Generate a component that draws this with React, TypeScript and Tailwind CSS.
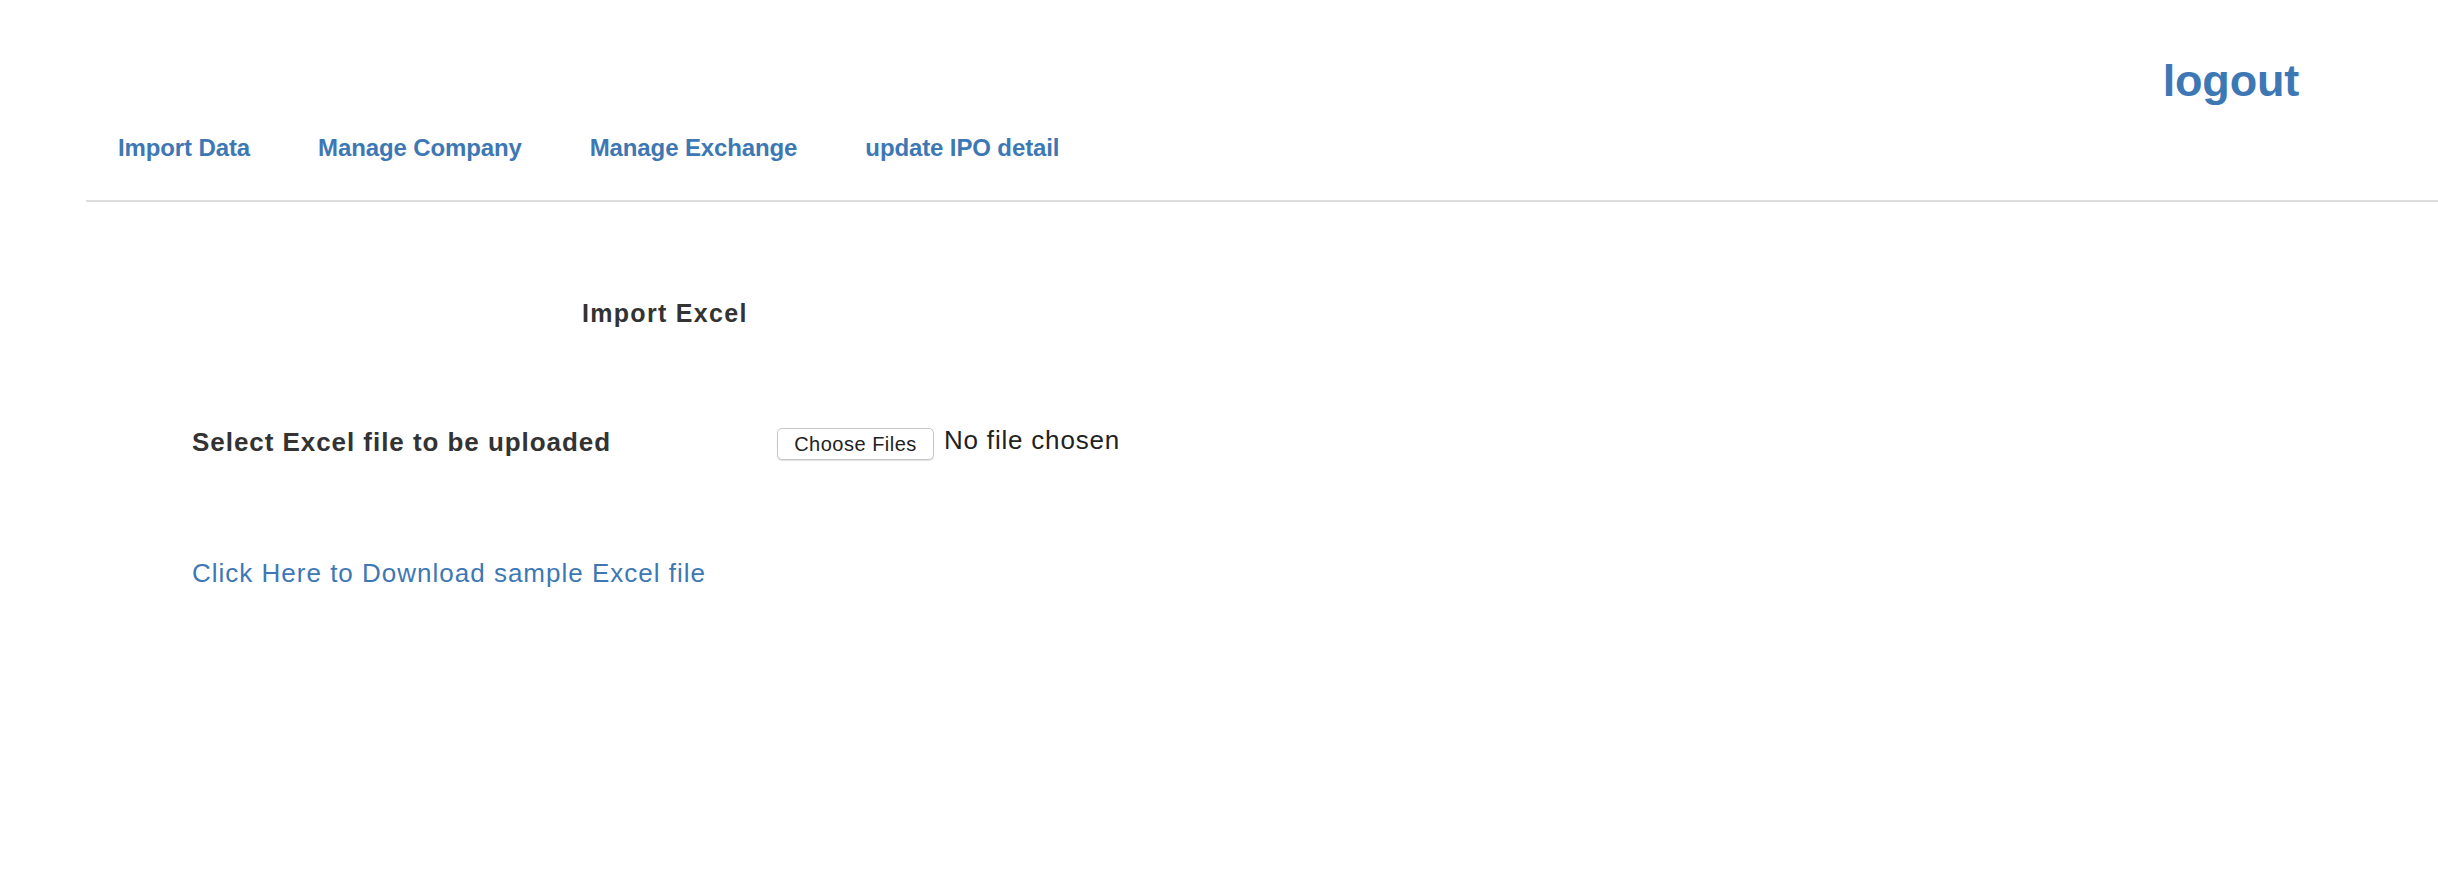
const navItems = ["Import Data", "Manage Company", "Manage Exchange", "update IPO detail"]

const App = () => {
  return (
    <div className="min-h-[880px] w-full bg-white font-['Liberation_Sans',Arial,sans-serif] text-[#333]">
      {/* header */}
      <header className="ml-[86px]">
        <div className="flex justify-end pr-[139px] pt-[58px]">
          <a className="text-[45px] font-bold leading-[45px] tracking-[-0.2px] text-[#3d78b5]">logout</a>
        </div>
        <nav className="mt-[33px] flex gap-[68px] border-b-2 border-[#dddddd] pb-[40px] pl-[32px]">
          {navItems.map((item) => (
            <a key={item} className="text-[24px] font-bold leading-[24px] tracking-[-0.12px] text-[#3d78b5]">
              {item}
            </a>
          ))}
        </nav>
      </header>

      {/* import form */}
      <main className="ml-[192px]">
        <h3 className="ml-[390px] mt-[99px] text-[25px] font-bold leading-[25px] tracking-[1.3px]">Import Excel</h3>

        <div className="mt-[100px] flex items-start">
          <label className="mt-[3px] w-[585px] text-[26px] font-bold leading-[26px] tracking-[0.95px]">
            Select Excel file to be uploaded
          </label>
          <button className="mt-[2px] flex h-[32px] w-[157px] items-center justify-center rounded-[5px] border border-[#c6c6c6] bg-white text-[20px] tracking-[0.5px] text-[#222] shadow-[0_1px_1px_rgba(0,0,0,0.12)]">
            Choose Files
          </button>
          <span className="ml-[10px] mt-[1px] text-[26px] leading-[26px] tracking-[0.8px] text-[#222]">No file chosen</span>
        </div>

        <a className="mt-[100px] block text-[26px] leading-[26px] tracking-[1px] text-[#3d78b5]">
          Click Here to Download sample Excel file
        </a>
      </main>
    </div>
  )
}

export default App
